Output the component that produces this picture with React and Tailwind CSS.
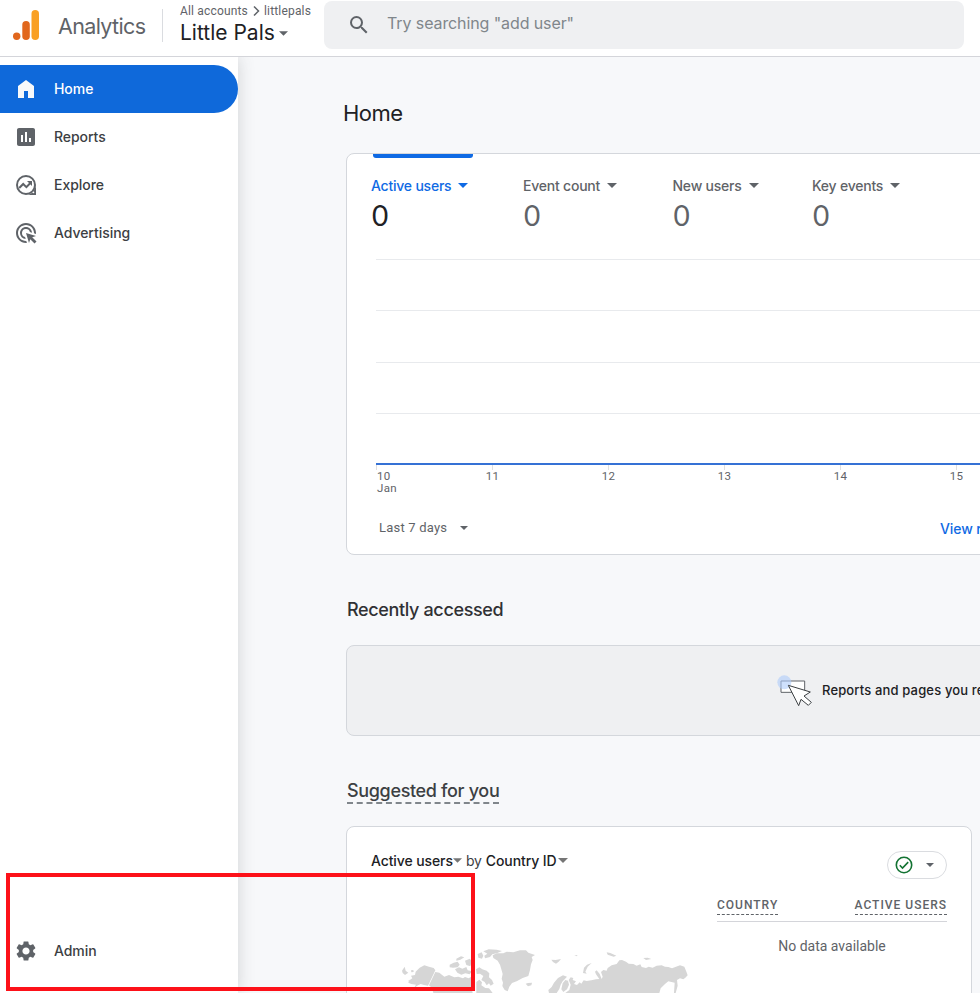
import React from 'react';
import {
  MdAdsClick, MdAssessment, MdSearch, MdSettings
} from 'react-icons/md';

const metrics = [
  { label: 'Active users', value: '0', width: 'w-[152px]', active: true },
  { label: 'Event count', value: '0', width: 'w-[149.500px]' },
  { label: 'New users', value: '0', width: 'w-[139.500px]' },
  { label: 'Key events', value: '0', width: 'w-[140px]' },
];

const days = ['10', '11', '12', '13', '14', '15'];

const Caret = ({ className = 'w-[10px] h-[5px]' }) => (
  <svg viewBox="0 0 10 5" className={`shrink-0 ${className}`} fill="currentColor">
    <path d="M0 0h10L5 5z" />
  </svg>
);

const HomeIcon = () => (
  <svg viewBox="0 0 24 24" className="w-6 h-6" fill="currentColor">
    <path d="M4 21V9l8-6 8 6v12h-6v-7h-4v7z" />
  </svg>
);

const ExploreIcon = () => (
  <svg viewBox="0 0 24 24" className="w-6 h-6" fill="none" stroke="currentColor" strokeWidth="2">
    <circle cx="12" cy="12" r="9" />
    <path d="M22 12v10H12c4 0 9-3 10-10z" fill="currentColor" stroke="none" />
    <circle cx="19.4" cy="19.3" r="0.9" fill="white" stroke="none" />
    <path d="M5.2 15l4-4 3.2 3.1 4.2-4.4" />
    <path d="M13 8h5v5z" fill="currentColor" stroke="none" />
  </svg>
);

const Logo = () => (
  <svg viewBox="0 0 27 30" className="w-[27px] h-[30px] shrink-0">
    <rect x="18.5" y="0" width="7.5" height="30" rx="3.75" fill="#f9a024" />
    <rect x="9.3" y="11" width="7.5" height="19" rx="3.75" fill="#e1671d" />
    <circle cx="3.7" cy="26.2" r="3.7" fill="#e1671d" />
  </svg>
);

const PointerArt = () => (
  <svg viewBox="0 0 105 96" className="w-[35px] h-[32px] shrink-0" strokeWidth="3">
    <path d="M12 18h71v34H12z" fill="#fff" stroke="#5f6368" />
    <circle cx="22" cy="22" r="21" fill="#aecbfa" fillOpacity="0.6" />
    <path d="M34 31l66 20-19 12 22 19-9 9-22-18-7 19z" fill="#fff" stroke="#3c4043" />
  </svg>
);

const WorldMap = () => (
  <svg viewBox="180 375 870 144" className="w-[290px] h-[48px] mt-[66px] ml-[29px] shrink-0" fill="#d6d6d6">
    {/* Alaska and Canada */}
    <path d="M186 452l8-12 3 12 8 6-10 7-7-6zM213 451l7-1 1 6-7 1zM205 483l12-8-4-8 12-2 2-10 12-12 14-7 14 4 14 4 5 7-22 46-12-2-10-3-8 4-12 8 6-10-14-2-9-4 3-10z" />
    <path d="M286 456L298 458 313 470 327 465 343 472 355 470 369 475 375 471 386 475 394 470 400 480 397 490 402 497 395 505 398 519H280L276 504 267 496z" />
    <path d="M329 434l12-6 12-3 6 9-6 8-14 1-10-1zM349 416l14-7 10 3-12 7-12 3zM345 448l12-6 10 4 12-5 4 10 14 3-8 9-13-3-12 4-12-6zM375 422l14-6 7 8-5 15-12-4zM413 402l12-5 5 10-4 9-11-3zM430 394l16-6 24 1 16 4-14 6-15 4-7 8-15 4-2-8 9-6z" />
    <path d="M408 448L418 442 427 448 440 452 448 460 447 472 456 480 461 491 452 497 447 490 440 496 434 486 424 480 430 468 420 461 410 462zM409 486L418 479 426 487 424 496 436 504 447 505 458 519H409z" />
    {/* Greenland and Iceland */}
    <path d="M458 406L470 400 490 400 500 395 520 397 540 391 558 391 565 398 585 405 575 411 578 420 573 433 570 450 565 468 548 474 530 484 516 489 508 500 503 514 494 510 487 498 489 488 485 476 488 462 484 448 480 434 473 422 460 414z" />
    <path d="M557 491l7-2 12-1-2 8-10 3z" />
    {/* Arctic islands */}
    <path d="M634 419l13 1 16-3-7 8-8 6-9-5zM703 405l10 1-3 3zM729 459l3-16 9-9 14-5-12 11-7 15 4 6zM800 397l11 2 18 8-8 3-18-6zM910 414l13-1 11 4-16 3z" />
    {/* Scandinavia */}
    <path d="M625 510L635 501 642 488 654 474 669 466 681 470 674 478 668 484 662 494 658 507 650 519H627zM664 508L668 490 676 480 684 482 687 494 681 508 670 516z" />
    {/* Northern Asia */}
    <path d="M676 519L688 510 692 494 686 480 692 472 700 474 698 480 708 484 702 492 711 495 719 487 724 491 731 481 740 483 754 481 768 478 778 477 768 463 765 455 770 451 779 462 785 477 788 470 783 456 790 450 800 452 803 444 815 436 830 432 838 421 846 420 858 425 866 431 880 432 890 437 901 433 905 441 918 444 926 440 938 443 950 437 965 436 975 440 985 441 996 445 1008 440 1020 436 1033 440 1038 452 1043 466 1036 473 1030 478 1020 475 1011 480 1013 497 1007 519H1002L1004 488 985 484 975 492 962 505 958 519z" />
  </svg>
);

const NavItem = ({ icon, label, active }) => (
  <div
    className={`flex items-center h-12 pl-[14px] gap-4 text-[14px] font-medium ${
      active ? 'bg-[#0f69da] text-white rounded-r-full' : 'text-[#3c4043]'
    }`}
  >
    <span className={active ? 'text-[#f8f9fa]' : 'text-[#5f6368]'}>{icon}</span>
    <span className="pb-[2px] tracking-[-0.05px]">{label}</span>
  </div>
);

const Header = () => (
  <header className="flex h-[57px] shrink-0 border-b border-[#d4d5da] bg-white relative z-20">
    <div className="flex items-start pl-[13px] pt-[10px] w-[162px] shrink-0">
      <Logo />
      <span className="ml-[18px] text-[21.5px] leading-[32px] text-[#5f6368] tracking-[-0.65px]">Analytics</span>
    </div>
    <div className="w-px h-[33px] mt-[9px] bg-[#dadce0] shrink-0" />
    <div className="pl-[17px] pt-1 w-[161px] shrink-0 whitespace-nowrap">
      <div className="flex items-center h-[14px] font-[Roboto] text-[12px] text-[#5f6368] tracking-[0.17px]">
        All accounts
        <svg viewBox="0 0 7 10" className="w-[7px] h-[10px] ml-[5px] mr-[4px]" fill="none" stroke="currentColor" strokeWidth="1.5">
          <path d="M1 .5L5.5 5 1 9.500" />
        </svg>
        littlepals
      </div>
      <div className="flex items-center h-[29px] text-[21px] text-[#202124]">
        Little Pals
        <Caret className="w-[9px] h-[5px] ml-[4px] mt-[2px] text-[#5f6368]" />
      </div>
    </div>
    <div className="flex items-center w-[640px] h-[48px] mt-px bg-[#eff0f2] rounded-lg pl-[23px] shrink-0">
      <MdSearch className="w-6 h-6 text-[#5f6368]" />
      <span className="ml-[16px] pb-[4px] text-[16px] text-[#80868b] tracking-[-0.1px]">Try searching "add user"</span>
    </div>
  </header>
);

const OverviewCard = () => (
  <section className="w-[760px] h-[402px] shrink-0 bg-white border border-[#d4d7dc] rounded-lg ml-[108px]">
    <div className="w-[100px] h-1 ml-[26px] bg-[#0f6ae4] rounded-b-[3px]" />
    <div className="flex pl-6 pt-[17px] h-[101px]">
      {metrics.map((m) => (
        <div key={m.label} className={`${m.width} shrink-0 ${m.active ? 'text-[#0f6ae4]' : 'text-[#5f6368]'}`}>
          <div className="flex items-center h-5 gap-[7px] text-[14px] font-medium tracking-[-0.22px]">
            {m.label}
            <Caret className="w-[10px] h-[5px] mt-[1px]" />
          </div>
          <div className={`mt-[2px] ml-[1px] h-9 leading-9 text-[28px] font-[Lato] ${m.active ? 'text-[#202124]' : ''}`}>{m.value}</div>
        </div>
      ))}
    </div>
    <div className="ml-[29px]">
      <div className="h-[51px] border-t border-[#e8eaed]" />
      <div className="h-[52px] border-t border-[#e8eaed]" />
      <div className="h-[51px] border-t border-[#e8eaed]" />
      <div className="h-[50px] border-t border-[#e8eaed]" />
      <div className="h-[2px] bg-[#3571d5]" />
      <div className="flex h-[51px] font-[Roboto] text-[11.5px] leading-[12px] text-[#5f6368] tracking-[0.3px]">
        {days.map((day, i) => (
          <div key={day} className="w-[116px] shrink-0">
            <div className="w-px h-[5px] bg-[#e0e0e0]" />
            <div className={i === 0 ? 'ml-[1px]' : '-ml-[20px] w-[41px] text-center'}>
              {day}
              {i === 0 && <div>Jan</div>}
            </div>
          </div>
        ))}
      </div>
    </div>
    <div className="flex items-center h-6 pl-8 whitespace-nowrap">
      <div className="flex items-center w-[561px] shrink-0 font-[Roboto] text-[13px] text-[#5f6368] tracking-[0.2px]">
        Last 7 days
        <Caret className="w-[8px] h-[4px] ml-[13px]" />
      </div>
      <span className="text-[14px] font-medium text-[#0f6ae4] tracking-[-0.1px]">View reports snapshot</span>
    </div>
  </section>
);

const SuggestedCard = () => (
  <section className="w-[626px] h-[300px] shrink-0 bg-white border border-[#d4d7dc] rounded-lg ml-[108px] pl-6 pr-6 pt-6">
    <div className="flex items-start justify-between h-7">
      <div className="flex items-center h-[18px] text-[14px] font-medium text-[#202124] tracking-[-0.1px]">
        Active users
        <Caret className="w-[9px] h-[5px] text-[#757575]" />
        <span className="mx-[4px] font-normal text-[#3c4043]">by</span>
        Country ID
        <Caret className="w-[10px] h-[5px] ml-[1px] text-[#757575]" />
      </div>
      <div className="flex items-center w-[60px] h-7 rounded-full border border-[#dadce0] pl-[7px]">
        <svg viewBox="0 0 18 18" className="w-[18px] h-[18px]" fill="none" stroke="#137333" strokeWidth="1.6">
          <circle cx="9" cy="9" r="7.7" />
          <path d="M4.800 9.300l2.700 2.700 5.700-5.900" />
        </svg>
        <Caret className="w-[8px] h-[4px] ml-[13px] text-[#5f6368]" />
      </div>
    </div>
    <div className="flex justify-between items-start">
      <WorldMap />
      <div className="w-[230px] mt-[18px] font-[Roboto] text-[#5f6368]">
        <div className="flex justify-between h-[25px] border-b border-[#d4d5da] text-[12px] font-medium tracking-[1px]">
          <span className="h-[18px] leading-[16px] border-b border-dashed border-[#5f6368]">COUNTRY</span>
          <span className="h-[18px] leading-[16px] border-b border-dashed border-[#5f6368]">ACTIVE USERS</span>
        </div>
        <div className="mt-[14px] text-center text-[14px] leading-5">No data available</div>
      </div>
    </div>
  </section>
);

const App = () => {
  return (
    <div className="relative flex flex-col w-[980px] h-[993px] overflow-hidden bg-[#f7f8fa] font-[Inter,sans-serif]">
      <Header />
      <div className="flex flex-1 min-h-0">
        <nav className="flex flex-col justify-between w-[238px] shrink-0 pt-2 pb-[18px] bg-white shadow-[0_0_16px_rgba(60,64,67,0.2)] z-10">
          <div>
            <NavItem icon={<HomeIcon />} label="Home" active />
            <NavItem icon={<MdAssessment className="w-6 h-6" />} label="Reports" />
            <NavItem icon={<ExploreIcon />} label="Explore" />
            <NavItem icon={<MdAdsClick className="w-6 h-6" />} label="Advertising" />
          </div>
          <NavItem icon={<MdSettings className="w-6 h-6" />} label="Admin" />
        </nav>

        <main className="flex flex-col w-[742px] shrink-0 overflow-hidden">
          <h1 className="h-[96px] shrink-0 pl-[105px] pt-[40px] text-[22px] leading-8 text-[#202124] tracking-[-0.5px]">Home</h1>
          <OverviewCard />

          <h2 className="h-[90px] shrink-0 pl-[109px] pt-[43px] text-[18px] leading-6 font-medium text-[#303134] tracking-[-0.36px]">
            Recently accessed
          </h2>
          <section className="flex items-center w-[1200px] h-[91px] shrink-0 ml-[108px] bg-[#eff0f2] border border-[#d4d7dc] rounded-lg pl-[430px]">
            <PointerArt />
            <span className="ml-[10px] text-[13px] font-medium text-[#202124] tracking-[0.15px] whitespace-nowrap">
              Reports and pages you recently accessed will appear here.
            </span>
          </section>

          <div className="h-[90px] shrink-0 pl-[109px] pt-[42px]">
            <h2 className="inline-block h-[26px] pt-[1px] text-[18px] leading-6 font-medium text-[#3c4043] tracking-[-0.34px] border-b-2 border-dashed border-[#80868b]">
              Suggested for you
            </h2>
          </div>
          <SuggestedCard />
        </main>
      </div>

      {/* highlight around the Admin entry */}
      <div className="absolute left-[6px] top-[873px] w-[469px] h-[118px] border-4 border-[#fd1119] z-30" />
    </div>
  );
};

export default App;
